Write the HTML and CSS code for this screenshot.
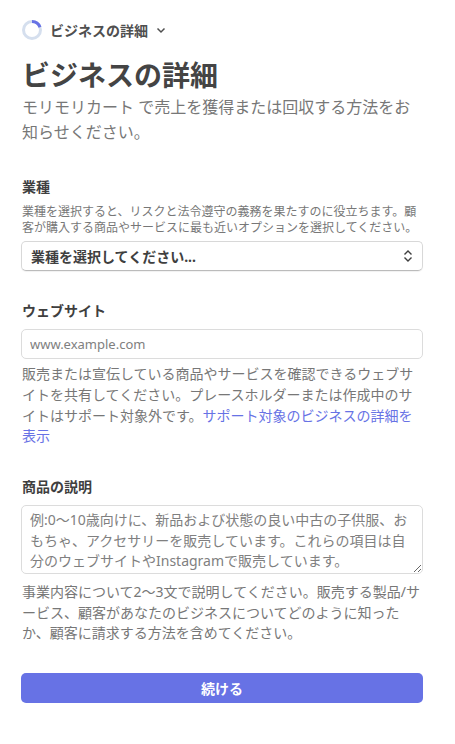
FILE: index.html
```html
<!DOCTYPE html>
<html lang="ja">
<head>
  <meta charset="UTF-8">
  <title>ビジネスの詳細</title>
  <link rel="stylesheet" href="styles.css">
</head>
<body>
<main class="page">
  <div class="crumb">
    <svg class="progress" width="20" height="20" viewBox="0 0 20 20">
      <circle cx="10" cy="10" r="8.5" fill="none" stroke="#d5dfee" stroke-width="3"/>
      <path d="M10 1.5 A8.5 8.5 0 0 1 18 7.2" fill="none" stroke="#6772e5" stroke-width="3"/>
    </svg>
    <span class="crumb-text">ビジネスの詳細</span>
    <svg class="crumb-arrow" width="10" height="10" viewBox="0 0 10 10">
      <path d="M1.5 3.5 L5 7 L8.5 3.5" fill="none" stroke="#4f4f4f" stroke-width="1.5"/>
    </svg>
  </div>

  <h1>ビジネスの詳細</h1>
  <p class="lead">モリモリカート で売上を獲得または回収する方法をお知らせください。</p>

  <section class="field field-industry">
    <label class="label">業種</label>
    <p class="hint-small">業種を選択すると、リスクと法令遵守の義務を果たすのに役立ちます。顧客が購入する商品やサービスに最も近いオプションを選択してください。</p>
    <div class="select">
      <span>業種を選択してください...</span>
      <svg width="12" height="14" viewBox="0 0 12 14">
        <path d="M2.5 5.5 L6 2 L9.5 5.5 M2.5 8.5 L6 12 L9.5 8.5" fill="none" stroke="#3f3f3f" stroke-width="1.4"/>
      </svg>
    </div>
  </section>

  <section class="field field-web">
    <label class="label">ウェブサイト</label>
    <input class="input" type="text" placeholder="www.example.com">
    <p class="hint">販売または宣伝している商品やサービスを確認できるウェブサイトを共有してください。プレースホルダーまたは作成中のサイトはサポート対象外です。<a href="#">サポート対象のビジネスの詳細を表示</a></p>
  </section>

  <section class="field field-desc">
    <label class="label">商品の説明</label>
    <textarea class="textarea" rows="3" placeholder="例:0〜10歳向けに、新品および状態の良い中古の子供服、おもちゃ、アクセサリーを販売しています。これらの項目は自分のウェブサイトやInstagramで販売しています。"></textarea>
    <p class="hint">事業内容について2〜3文で説明してください。販売する製品/サービス、顧客があなたのビジネスについてどのように知ったか、顧客に請求する方法を含めてください。</p>
  </section>

  <button class="submit">続ける</button>
</main>
</body>
</html>
```

FILE: styles.css
```css
* {
  box-sizing: border-box;
}
body {
  margin: 0;
  background: #fff;
  color: #3f3f3f;
  font-family: "Noto Sans", "Noto Sans CJK JP", sans-serif;
}
.page {
  width: 402px;
  margin-left: 21px;
  padding-top: 20px;
  padding-bottom: 41px;
}
.crumb {
  display: flex;
  align-items: center;
  height: 20px;
  margin-left: 1px;
  gap: 8px;
}
.crumb-text {
  font-size: 14px;
  font-weight: 700;
  color: #4f4f4f;
}
.crumb-arrow {
  margin-left: 0;
}
h1 {
  margin: 15px 0 0 1px;
  font-size: 28px;
  line-height: 40px;
  font-weight: 700;
  color: #444;
}
.lead {
  margin: 0 0 0 1px;
  font-size: 16px;
  line-height: 25px;
  color: #777;
}
.field-industry {
  margin-top: 32px;
}
.field-web {
  margin-top: 30px;
}
.field-desc {
  margin-top: 30px;
}
.label {
  display: block;
  margin-left: 1px;
  font-size: 14px;
  line-height: 20px;
  font-weight: 700;
  color: #3f3f3f;
}
.hint-small {
  margin: 7px 0 6px 1px;
  font-size: 12px;
  line-height: 15.6px;
  color: #777;
}
.select {
  display: flex;
  align-items: center;
  justify-content: space-between;
  height: 30px;
  padding: 0 8px 0 9px;
  border: 1px solid #d8d8d8;
  border-bottom-color: #bbb;
  border-radius: 5px;
  font-size: 14px;
  font-weight: 700;
  color: #3f3f3f;
  box-shadow: 0 1px 1px rgba(0,0,0,0.06);
}
.input {
  display: block;
  width: 100%;
  height: 30px;
  margin-top: 8px;
  padding: 0 8px;
  border: 1px solid #dcdcdc;
  border-radius: 5px;
  font: inherit;
  font-size: 13px;
}
.input::placeholder,
.textarea::placeholder {
  color: #808080;
  opacity: 1;
}
.textarea {
  display: block;
  width: 100%;
  height: 69px;
  margin-top: 8px;
  padding: 4px 8px 0;
  border: 1px solid #dcdcdc;
  border-radius: 5px;
  font: inherit;
  font-size: 14px;
  line-height: 20.7px;
}
.hint {
  margin: 5px 0 0 1px;
  font-size: 14px;
  line-height: 20.7px;
  color: #777;
}
.field-web .hint {
  max-width: 393px;
}
.field-desc .hint {
  margin-top: 8px;
}
.hint a {
  color: #6772e5;
  text-decoration: none;
}
.submit {
  display: block;
  width: 100%;
  height: 30px;
  margin-top: 29px;
  border: none;
  border-radius: 5px;
  background: #6772e5;
  color: #fff;
  font: inherit;
  font-size: 14px;
  font-weight: 700;
}
```
